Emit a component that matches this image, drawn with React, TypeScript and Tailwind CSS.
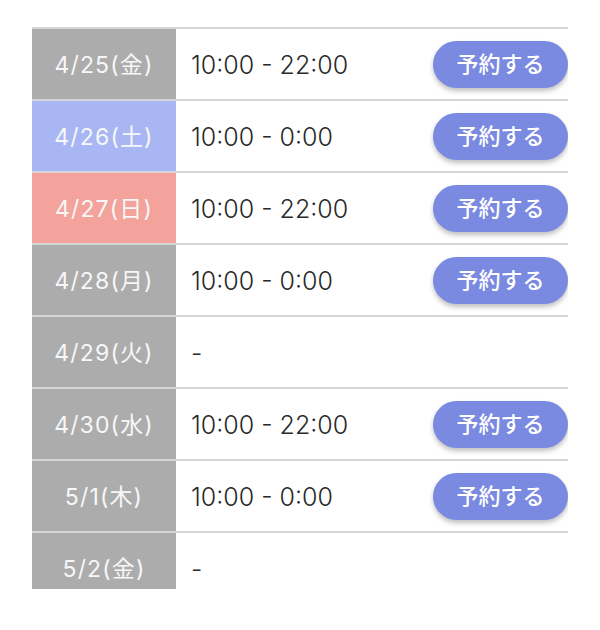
import React from "react";

type Day = { date: string; kind: "normal" | "sat" | "sun"; hours: string | null };

const days: Day[] = [
  { date: "4/25(金)", kind: "normal", hours: "10:00 - 22:00" },
  { date: "4/26(土)", kind: "sat", hours: "10:00 - 0:00" },
  { date: "4/27(日)", kind: "sun", hours: "10:00 - 22:00" },
  { date: "4/28(月)", kind: "normal", hours: "10:00 - 0:00" },
  { date: "4/29(火)", kind: "normal", hours: null },
  { date: "4/30(水)", kind: "normal", hours: "10:00 - 22:00" },
  { date: "5/1(木)", kind: "normal", hours: "10:00 - 0:00" },
  { date: "5/2(金)", kind: "normal", hours: null },
];

const cellColor = {
  normal: "bg-[#acacac]",
  sat: "bg-[#a8b7f4]",
  sun: "bg-[#f3a39b]",
};

const App = () => {
  return (
    <div
      className="h-[630px] w-[600px] bg-white pt-[27px]"
      style={{ fontFamily: 'Inter, "Noto Sans CJK JP", sans-serif' }}
    >
      <div className="mx-8 h-[562px] w-[536px] overflow-hidden">
        {days.map((d) => (
          <div key={d.date} className="flex h-[72px] border-t-2 border-[#d6d6d6]">
            <div
              className={`flex w-[144px] shrink-0 items-center justify-center pt-[2px] text-[23px] tracking-[0.05em] text-[#f7f7f7] ${cellColor[d.kind]}`}
            >
              {d.date}
            </div>
            <div className="flex flex-1 items-center justify-between pl-[15px]">
              <span className="pt-[3px] text-[25px] font-light text-[#2a2a2a]">{d.hours ?? "-"}</span>
              {d.hours && (
                <button
                  className="h-[47px] w-[135px] rounded-full bg-[#7a8ae0] pb-[3px] text-[22px] font-medium text-white shadow-[0_3px_5px_rgba(0,0,0,0.25)]"
                  style={{ fontFamily: '"Noto Sans CJK JP", sans-serif' }}
                >
                  予約する
                </button>
              )}
            </div>
          </div>
        ))}
      </div>
    </div>
  );
};

export default App;
